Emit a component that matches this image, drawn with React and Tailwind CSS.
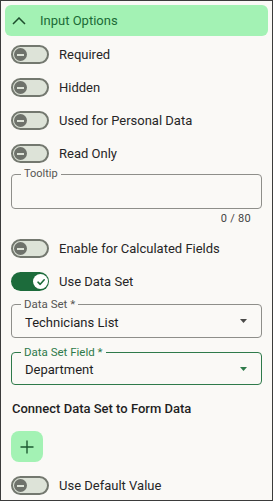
import React from 'react'

const Toggle = ({ on }) => {
  if (on) {
    return (
      <div className="w-[38px] h-[19px] rounded-full bg-[#1c6b3b] flex items-center justify-end pr-[1px]">
        <div className="w-[15px] h-[15px] rounded-full bg-white flex items-center justify-center">
          <svg width="10" height="10" viewBox="0 0 10 10" fill="none">
            <path d="M2 5.2 L4.2 7.3 L8.2 2.8" stroke="#1c6b3b" strokeWidth="1.6" strokeLinecap="round" strokeLinejoin="round" />
          </svg>
        </div>
      </div>
    )
  }
  return (
    <div className="w-[38px] h-[19px] rounded-full border-2 border-[#73786f] bg-[#dde3d8] flex items-center pl-[1px]">
      <div className="w-[13px] h-[13px] rounded-full bg-[#6e726b] flex items-center justify-center">
        <div className="w-[7px] h-[2px] bg-[#dde3d8]" />
      </div>
    </div>
  )
}

const ToggleRow = ({ label, on }) => (
  <div className="h-[33px] flex items-center gap-[10px]">
    <Toggle on={on} />
    <span className="text-[13px] text-[#262626]">{label}</span>
  </div>
)

const Caret = ({ color }) => (
  <svg width="7" height="4" viewBox="0 0 7 4">
    <path d="M0 0 L7 0 L3.5 4 Z" fill={color} />
  </svg>
)

const SelectBox = ({ label, value, focused, className }) => (
  <div
    className={
      'relative rounded-[4px] flex items-center justify-between pl-[13px] pr-[14px] ' +
      (focused ? 'border-[1.5px] border-[#2e7a4a] h-[33px] ' : 'border border-[#8e8e8a] h-[34px] ') +
      className
    }
  >
    <span
      className={
        'absolute -top-[8px] left-[9px] px-[3px] bg-[#faf9f6] text-[11.5px] leading-[14px] ' +
        (focused ? 'text-[#2e7a4a]' : 'text-[#555552]')
      }
    >
      {label}
    </span>
    <span className="text-[13px] text-[#1f1f1f] pt-[3px]">{value}</span>
    <Caret color={focused ? '#2e7a4a' : '#4a4a48'} />
  </div>
)

export default function App() {
  return (
    <div
      className="w-[273px] h-[501px] overflow-hidden border border-[#3b3b3b] bg-[#faf9f6] px-[4px] pt-[4px]"
      style={{ fontFamily: 'Roboto, "Noto Sans", sans-serif' }}
    >
      <div className="h-[31px] rounded-[6px] bg-[#a3f2b4] flex items-center pl-[7px]">
        <svg width="14" height="8" viewBox="0 0 14 8" fill="none">
          <path d="M1 7 L7 1 L13 7" stroke="#1d4d2c" strokeWidth="1.5" />
        </svg>
        <span className="ml-[14px] text-[13px] text-[#1b6b37]">Input Options</span>
      </div>

      <div className="px-[6px] mt-[2px]">
        <ToggleRow label="Required" />
        <ToggleRow label="Hidden" />
        <ToggleRow label="Used for Personal Data" />
        <ToggleRow label="Read Only" />

        <div className="relative mt-[4px] h-[35px] rounded-[4px] border border-[#8e8e8a]">
          <span className="absolute -top-[7px] left-[9px] px-[3px] bg-[#faf9f6] text-[11px] leading-[12px] text-[#555552]">
            Tooltip
          </span>
        </div>
        <div className="h-[20px] flex items-center justify-end pr-[11px] text-[11px] tracking-[0.3px] text-[#444442]">
          0 / 80
        </div>

        <div className="mt-[3px]">
          <ToggleRow label="Enable for Calculated Fields" />
          <ToggleRow label="Use Data Set" on />
        </div>

        <SelectBox label="Data Set *" value="Technicians List" className="mt-[6px]" />
        <SelectBox label="Data Set Field *" value="Department" focused className="mt-[14px]" />

        <div className="mt-[15px] h-[18px] leading-[18px] text-[13px] font-medium text-[#1f1f1f] pl-[1px]">
          Connect Data Set to Form Data
        </div>

        <button className="mt-[13px] w-[32px] h-[31px] rounded-[8px] bg-[#a3f2b4] flex items-center justify-center">
          <svg width="14" height="14" viewBox="0 0 14 14" fill="none">
            <path d="M7 0.5 V13.5 M0.5 7 H13.5" stroke="#1d5a31" strokeWidth="1.4" />
          </svg>
        </button>

        <div className="mt-[7px]">
          <ToggleRow label="Use Default Value" />
        </div>
      </div>
    </div>
  )
}
